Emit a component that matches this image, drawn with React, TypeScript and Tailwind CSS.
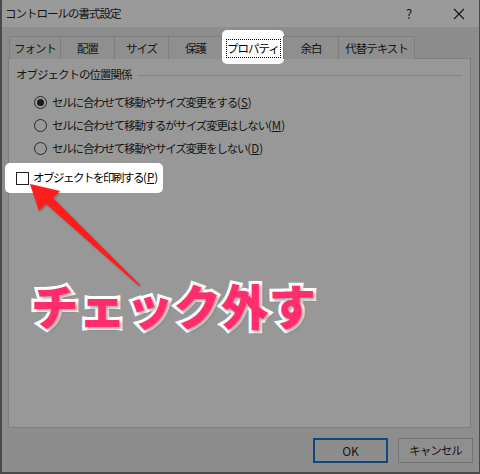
import React from "react";

const F = { fontFamily: '"Noto Sans CJK JP", "Noto Sans", sans-serif' };

function Tab({ label, w }: { label: string; w: string }) {
  return (
    <div className={`${w} h-[23px] border border-b-0 border-[#7f7f7f] -ml-px first:ml-0 flex items-center justify-center pt-px text-[11.5px] tracking-[-1px] whitespace-nowrap text-[#151515] bg-[#8f8f8f]`}>
      {label}
    </div>
  );
}

function Radio({ checked, label, u }: { checked?: boolean; label: string; u: string }) {
  return (
    <div className="flex items-center h-[23px] text-[11.5px] tracking-[-1.2px] whitespace-nowrap text-[#151515]">
      <div className="w-[13px] h-[13px] rounded-full border border-[#2a2a2a] flex items-center justify-center mr-[5px] shrink-0">
        {checked && <div className="w-[7px] h-[7px] rounded-full bg-[#1a1a1a]" />}
      </div>
      <span>
        {label}
        <span className="tracking-normal">
          (<span className="underline">{u}</span>)
        </span>
      </span>
    </div>
  );
}

export default function App() {
  return (
    <div className="relative w-[480px] h-[474px] overflow-hidden bg-[#8d8d8d] border-l-2 border-b-2 border-r border-[#4a4a4a]" style={F}>
      {/* title bar */}
      <div className="h-[27px] bg-[#9a9a9a] flex items-center pl-[3px] pr-[10px] text-[11.5px] tracking-[-1px] whitespace-nowrap text-[#151515]">
        <span className="flex-1">コントロールの書式設定</span>
        <span className="w-[12px] text-center text-[13px] tracking-normal mr-[38px]">?</span>
        <svg width="12" height="12" viewBox="0 0 12 12" className="mr-[4px]">
          <path d="M1 1L11 11M11 1L1 11" stroke="#151515" strokeWidth="1.1" />
        </svg>
      </div>
      {/* tabs */}
      <div className="flex pl-[7px] h-[32px] -mb-px relative z-10 items-end">
        <Tab label="フォント" w="w-[52px]" />
        <Tab label="配置" w="w-[55px]" />
        <Tab label="サイズ" w="w-[55px]" />
        <Tab label="保護" w="w-[55px]" />
        <div className="w-[62px] h-[34px] -ml-px -mb-[5px] rounded-[5px] bg-white flex flex-col items-center pt-[9px]">
          <div className="border border-dotted border-black w-[55px] h-[19px] flex items-center justify-center text-[11.5px] tracking-[-1px] whitespace-nowrap text-black">プロパティ</div>
        </div>
        <Tab label="余白" w="w-[56px]" />
        <Tab label="代替テキスト" w="w-[77px]" />
      </div>
      {/* panel */}
      <div className="ml-[6px] w-[463px] h-[370px] border border-[#7f7f7f] bg-[#989898] pt-[8px] pl-[7px]">
        <div className="flex items-center h-[16px] text-[11.5px] tracking-[-1px] whitespace-nowrap text-[#151515]">
          <span>オブジェクトの位置関係</span>
          <div className="flex-1 h-px bg-[#838383] ml-[6px] mr-[8px]" />
        </div>
        <div className="pl-[18px] pt-[8px]">
          <Radio checked label="セルに合わせて移動やサイズ変更をする" u="S" />
          <Radio label="セルに合わせて移動するがサイズ変更はしない" u="M" />
          <Radio label="セルに合わせて移動やサイズ変更をしない" u="D" />
        </div>
        <div className="-ml-[11px] mt-[3px] w-[158px] h-[30px] rounded-[5px] bg-white flex items-center pl-[11px] text-[11.5px] tracking-[-1.5px] whitespace-nowrap text-black">
          <div className="w-[13px] h-[13px] border border-[#222] mr-[4px] shrink-0" />
          <span>
            オブジェクトを印刷する
            <span className="tracking-normal">
              (<span className="underline">P</span>)
            </span>
          </span>
        </div>
      </div>
      {/* buttons */}
      <div className="flex justify-end gap-[10px] pr-[6px] pt-[10px]">
        <div className="w-[75px] h-[25px] border-2 border-[#11477e] bg-[#8d8d8d] flex items-center justify-center text-[12px] text-[#151515]">OK</div>
        <div className="w-[75px] h-[25px] border border-[#737373] bg-[#8f8f8f] flex items-center justify-center text-[11.5px] tracking-[-1px] whitespace-nowrap text-[#151515]">キャンセル</div>
      </div>
      {/* arrow */}
      <svg className="absolute left-0 top-0" width="480" height="474" viewBox="0 0 480 474">
        <defs>
          <filter id="sh" x="-20%" y="-20%" width="140%" height="140%">
            <feDropShadow dx="1" dy="1" stdDeviation="1" floodColor="#000" floodOpacity="0.25" />
          </filter>
        </defs>
        <path d="M28 184 L58 191 L51 198 L138 285 L137 286 L44 204 L37 211 Z" fill="#ff1a1a" filter="url(#sh)" />
      </svg>
      {/* big label */}
      <div
        className="absolute left-[29px] top-[276px] text-[47.5px] leading-[58px] font-black text-[#ff2d6e] whitespace-nowrap"
        style={{ WebkitTextStroke: "6px #ffffff", paintOrder: "stroke fill", textShadow: "2px 2px 3px rgba(0,0,0,0.35)" }}
      >
        チェック外す
      </div>
    </div>
  );
}
